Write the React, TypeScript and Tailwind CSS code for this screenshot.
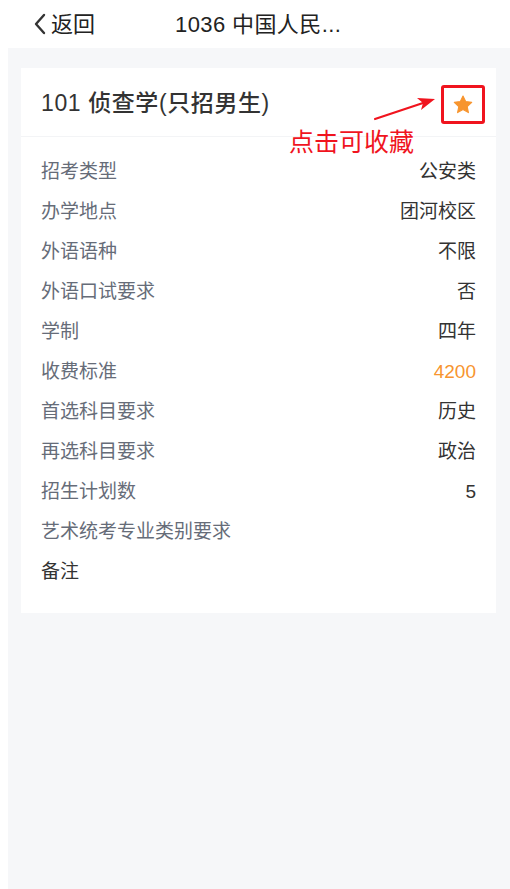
const rows: { label: string; value?: string; accent?: boolean; dark?: boolean }[] = [
  { label: "招考类型", value: "公安类" },
  { label: "办学地点", value: "团河校区" },
  { label: "外语语种", value: "不限" },
  { label: "外语口试要求", value: "否" },
  { label: "学制", value: "四年" },
  { label: "收费标准", value: "4200", accent: true },
  { label: "首选科目要求", value: "历史" },
  { label: "再选科目要求", value: "政治" },
  { label: "招生计划数", value: "5" },
  { label: "艺术统考专业类别要求" },
  { label: "备注", dark: true },
];

export default function App() {
  return (
    <div
      className="w-[510px] h-[889px] bg-white flex flex-col overflow-hidden"
      style={{ fontFamily: '"Liberation Sans", "Noto Sans CJK SC", sans-serif' }}
    >
      <header className="h-12 flex items-center text-[22px] text-[#222]">
        <div className="flex items-center pl-[33px] w-[175px]">
          <svg width="14" height="22" viewBox="0 0 14 22" className="mr-[4px]">
            <path d="M11 2 L3 11 L11 20" fill="none" stroke="#333" strokeWidth="2.4" strokeLinecap="round" strokeLinejoin="round" />
          </svg>
          <span>返回</span>
        </div>
        <span className="tracking-[0.4px]">1036 中国人民...</span>
      </header>

      <main className="flex-1 ml-2 bg-[#f6f7f9] pt-5 pl-[13px] pr-[14px]">
        <section className="relative bg-white">
          <div className="h-[69px] flex items-center pl-5 pr-5 border-b border-[#f3f4f6]">
            <h1 className="text-[23px] tracking-[0.6px] text-[#333] font-medium pt-[2px]">101 侦查学(只招男生)</h1>
          </div>

          {/* annotation: red frame around star */}
          <div className="absolute left-[420px] top-[17px] w-[44px] h-[39px] border-[3px] border-[#f0141e] rounded-[3px] flex items-center justify-center">
            <svg width="22" height="22" viewBox="0 0 24 24">
              <path
                d="M12 2.2l2.9 6.1 6.6.8-4.9 4.6 1.3 6.6L12 17l-5.9 3.3 1.3-6.6-4.9-4.6 6.6-.8z"
                fill="#f7952f"
                stroke="#f7952f"
                strokeWidth="1.2"
                strokeLinejoin="round"
              />
            </svg>
          </div>
          <svg className="absolute left-[352px] top-[24px]" width="64" height="30" viewBox="0 0 64 30">
            <path d="M2 27 L50 11" stroke="#f0141e" strokeWidth="2.2" strokeLinecap="round" />
            <path d="M62 7 L44 6 L50 11 L48 18 Z" fill="#f0141e" />
          </svg>
          <div className="absolute left-[268px] top-[59px] text-[25px] leading-[30px] text-[#f0141e]">点击可收藏</div>

          <div className="pt-[15px] pb-[21px]">
            {rows.map((r) => (
              <div key={r.label} className="h-10 flex items-center justify-between pl-5 pr-5 text-[19px]">
                <span className={r.dark ? "text-[#333]" : "text-[#666c78]"}>{r.label}</span>
                {r.value && (
                  <span className={r.accent ? "text-[#f7952f]" : "text-[#333]"}>{r.value}</span>
                )}
              </div>
            ))}
          </div>
        </section>
      </main>
    </div>
  );
}
